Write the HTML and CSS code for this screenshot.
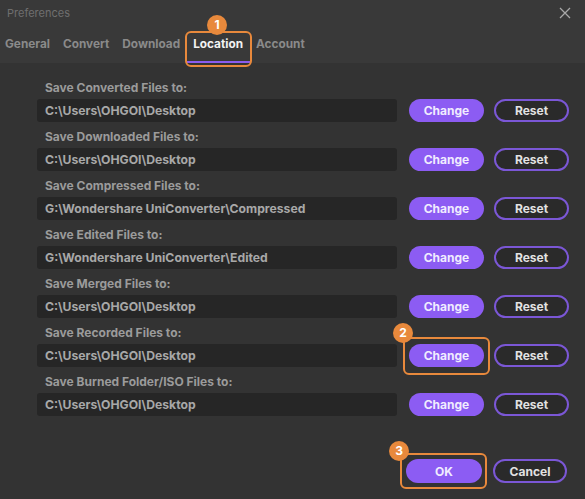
FILE: index.html
```html
<!DOCTYPE html>
<html>
<head>
<meta charset="utf-8">
<link rel="stylesheet" href="styles.css">
</head>
<body>
<div class="window">
  <div class="header">
    <div class="titlebar">
      <span class="title">Preferences</span>
      <svg class="close" width="12" height="12" viewBox="0 0 12 12"><path d="M1 1L11 11M11 1L1 11" stroke="#a8a8a8" stroke-width="1.3"/></svg>
    </div>
    <div class="tabs">
      <div class="tab">General</div>
      <div class="tab">Convert</div>
      <div class="tab">Download</div>
      <div class="tab active hl hl-tab"><span class="badge">1</span>Location</div>
      <div class="tab">Account</div>
    </div>
  </div>
  <div class="content">
    <div class="row">
      <div class="label">Save Converted Files to:</div>
      <div class="line"><div class="path">C:\Users\OHGOI\Desktop</div><button class="btn primary">Change</button><button class="btn outline">Reset</button></div>
    </div>
    <div class="row">
      <div class="label">Save Downloaded Files to:</div>
      <div class="line"><div class="path">C:\Users\OHGOI\Desktop</div><button class="btn primary">Change</button><button class="btn outline">Reset</button></div>
    </div>
    <div class="row">
      <div class="label">Save Compressed Files to:</div>
      <div class="line"><div class="path">G:\Wondershare UniConverter\Compressed</div><button class="btn primary">Change</button><button class="btn outline">Reset</button></div>
    </div>
    <div class="row">
      <div class="label">Save Edited Files to:</div>
      <div class="line"><div class="path">G:\Wondershare UniConverter\Edited</div><button class="btn primary">Change</button><button class="btn outline">Reset</button></div>
    </div>
    <div class="row">
      <div class="label">Save Merged Files to:</div>
      <div class="line"><div class="path">C:\Users\OHGOI\Desktop</div><button class="btn primary">Change</button><button class="btn outline">Reset</button></div>
    </div>
    <div class="row">
      <div class="label">Save Recorded Files to:</div>
      <div class="line"><div class="path">C:\Users\OHGOI\Desktop</div><button class="btn primary hl hl-btn"><span class="badge corner">2</span>Change</button><button class="btn outline">Reset</button></div>
    </div>
    <div class="row">
      <div class="label">Save Burned Folder/ISO Files to:</div>
      <div class="line"><div class="path">C:\Users\OHGOI\Desktop</div><button class="btn primary">Change</button><button class="btn outline">Reset</button></div>
    </div>
  </div>
  <div class="footer">
    <button class="btn primary ok hl hl-ok"><span class="badge corner">3</span>OK</button>
    <button class="btn outline cancel">Cancel</button>
  </div>
</div>
</body>
</html>
```

FILE: styles.css
```css
* { box-sizing: border-box; }
html, body { margin: 0; padding: 0; }
body {
  width: 585px;
  height: 499px;
  background: #333333;
  font-family: Inter, "Liberation Sans", Arial, sans-serif;
  font-size: 12px;
  overflow: hidden;
}
.window {
  width: 585px;
  height: 499px;
  display: flex;
  flex-direction: column;
  background: #333333;
}
.header {
  height: 63px;
  background: #393939;
  display: flex;
  flex-direction: column;
}
.titlebar {
  height: 26px;
  display: flex;
  align-items: center;
  justify-content: space-between;
  padding: 0 14px 0 7px;
}
.title {
  color: #6f6f6f;
  font-size: 11px;
}
.close { margin-top: -1px; }
.tabs {
  height: 37px;
  display: flex;
  margin-left: -1.5px;
}
.tab {
  padding: 0 6.5px;
  height: 37px;
  line-height: 37px;
  font-weight: 700;
  font-size: 11.8px;
  color: #8a8a8a;
  position: relative;
}
.tab.active {
  color: #f2f2f2;
  box-shadow: inset 0 -2px 0 #8b5cf0;
}
.hl { position: relative; }
.hl::before {
  content: "";
  position: absolute;
  border: 2px solid #e8893c;
  border-radius: 6px;
  pointer-events: none;
}
.hl-tab::before { left: -2px; right: -2px; top: 5px; bottom: -4px; }
.hl-btn::before { left: -6px; right: -6px; top: -7px; bottom: -8px; }
.hl-ok::before { left: -6px; right: -5px; top: -6px; bottom: -6px; }
.badge {
  position: absolute;
  width: 20px;
  height: 20px;
  border-radius: 50%;
  background: #e8893c;
  color: #fff;
  font-weight: 700;
  font-size: 12px;
  line-height: 20px;
  text-align: center;
  left: 50%;
  top: -11px;
  margin-left: -11px;
  z-index: 2;
}
.badge.corner {
  margin-left: -10px;
  margin-top: -10px;
}
.hl-btn .badge.corner { left: -6px; top: -11px; }
.hl-ok .badge.corner { left: -7px; top: -8px; }
.content {
  padding: 15px 16px 0 37px;
  display: flex;
  flex-direction: column;
  gap: 5px;
}
.row {
  display: flex;
  flex-direction: column;
}
.label {
  height: 20px;
  line-height: 20px;
  padding-left: 8px;
  color: #9b9b9b;
  font-weight: 700;
  font-size: 12px;
  margin-bottom: 1px;
}
.line {
  display: flex;
  align-items: center;
  height: 23px;
}
.path {
  width: 360px;
  height: 23px;
  line-height: 23px;
  background: #262626;
  border-radius: 3px;
  padding-left: 8px;
  color: #a8a8a8;
  font-weight: 700;
  font-size: 12.2px;
  margin-right: 12px;
}
.btn {
  width: 75px;
  height: 23px;
  border-radius: 12px;
  font-family: inherit;
  font-weight: 700;
  font-size: 12px;
  padding: 0;
  cursor: pointer;
}
.primary {
  background: #8c5cf3;
  border: none;
  color: #f0ecff;
}
.outline {
  background: #2a2a2a;
  border: 2px solid #7b57d6;
  color: #e2e2e2;
  margin-left: 10px;
}
.footer {
  margin-top: auto;
  display: flex;
  justify-content: flex-end;
  padding: 0 18px 16px 0;
}
.ok { width: 76px; height: 24px; }
.cancel { width: 74px; height: 24px; margin-left: 11px; }
```
